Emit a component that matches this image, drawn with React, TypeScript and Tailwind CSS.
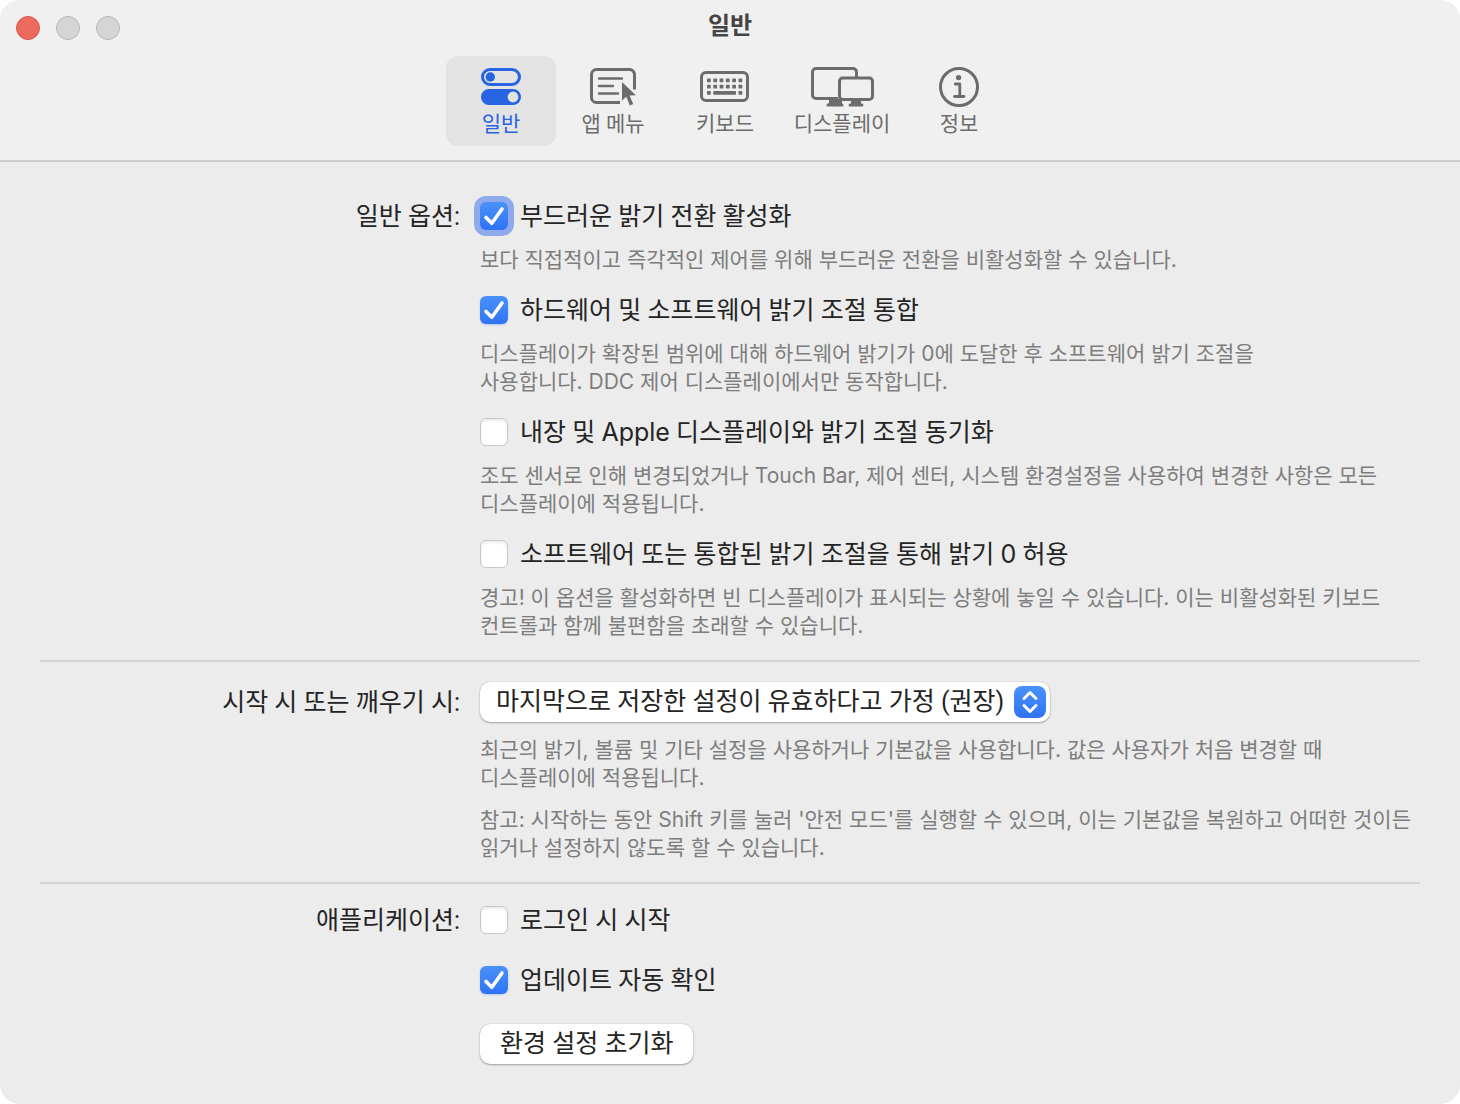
import { useState, type ReactNode } from "react";

const INK = "#6c6c6c";

function TogglesIcon() {
  return (
    <svg width="40" height="38" viewBox="0 0 40 38" fill="none">
      <rect x="1.5" y="1.5" width="37" height="15" rx="7.5" stroke="#2664e2" strokeWidth="3" />
      <circle cx="9.3" cy="9" r="4.7" fill="#2664e2" />
      <path
        fillRule="evenodd"
        fill="#2664e2"
        d="M8 21h24a8 8 0 0 1 0 16H8a8 8 0 0 1 0-16Zm24 2.6a5.4 5.4 0 1 0 0 10.8a5.4 5.4 0 0 0 0-10.8Z"
      />
    </svg>
  );
}

function MenuIcon() {
  return (
    <svg width="48" height="38" viewBox="-1 0 48 38" fill="none">
      <path
        d="M30 34.5H6.5a5 5 0 0 1-5-5v-23a5 5 0 0 1 5-5h33a5 5 0 0 1 5 5V21.5"
        stroke={INK}
        strokeWidth="3"
      />
      <path d="M9 10.5h23M9 18h14M9 25.5h19" stroke={INK} strokeWidth="2.4" strokeLinecap="round" />
      <path d="M32 14v18.5l4.3-3.8 3.5 8.8 3.4-1.4-3.6-8.5 6.2-.4Z" fill={INK} />
    </svg>
  );
}

function KeyboardIcon() {
  const cols = [7, 13.3, 19.6, 25.9, 32.2, 38.5];
  return (
    <svg width="50" height="32" viewBox="0 0 50 32" fill="none">
      <rect x="1.5" y="1.5" width="46" height="28" rx="4.5" stroke={INK} strokeWidth="3" />
      {cols.map((x) => (
        <g key={x} fill={INK}>
          <rect x={x} y="7.4" width="3.8" height="3.8" rx="0.6" />
          <rect x={x} y="13.7" width="3.8" height="3.8" rx="0.6" />
        </g>
      ))}
      <rect x="7" y="20" width="3.8" height="3.8" rx="0.6" fill={INK} />
      <rect x="13.3" y="20" width="22.7" height="3.8" rx="0.8" fill={INK} />
      <rect x="38.5" y="20" width="3.8" height="3.8" rx="0.6" fill={INK} />
    </svg>
  );
}

function DisplaysIcon() {
  return (
    <svg width="64" height="40" viewBox="-1 0 64 40" fill="none">
      <path
        d="M27 31.5H5A3.5 3.5 0 0 1 1.5 28V5A3.5 3.5 0 0 1 5 1.5h37A3.5 3.5 0 0 1 45.5 5V10"
        stroke={INK}
        strokeWidth="3"
      />
      <rect x="28.5" y="11" width="33" height="21.5" rx="3.2" stroke={INK} strokeWidth="3" />
      <path d="M18 32h13v4.5a1.5 1.5 0 0 1 0 3H17a1.5 1.5 0 0 1 0-3l1-.8Z" fill={INK} />
      <path d="M40 33h10v3.3l1.2.4a1.4 1.4 0 0 1-.4 2.8H39.2a1.4 1.4 0 0 1-.4-2.8l1.2-.4Z" fill={INK} />
    </svg>
  );
}

function InfoIcon() {
  return (
    <svg width="40" height="40" viewBox="0 0 40 40" fill="none">
      <circle cx="20" cy="20" r="18.5" stroke={INK} strokeWidth="3" />
      <circle cx="19.6" cy="10.6" r="2.7" fill={INK} />
      <path d="M16.3 17h4.5v12.5M15.5 29.5h9.5" stroke={INK} strokeWidth="2.8" strokeLinecap="round" strokeLinejoin="round" />
    </svg>
  );
}

const tabs: { label: string; icon: ReactNode; wide?: boolean }[] = [
  { label: "일반", icon: <TogglesIcon /> },
  { label: "앱 메뉴", icon: <MenuIcon /> },
  { label: "키보드", icon: <KeyboardIcon /> },
  { label: "디스플레이", icon: <DisplaysIcon />, wide: true },
  { label: "정보", icon: <InfoIcon /> },
];

function Latin({ children }: { children: ReactNode }) {
  return <span className="font-['Inter',sans-serif] leading-none">{children}</span>;
}

function Check({ on = false, focused = false, children }: { on?: boolean; focused?: boolean; children: ReactNode }) {
  const [checked, setChecked] = useState(on);
  return (
    <label className="flex h-7 items-center gap-3">
      <span className="grid size-7 shrink-0">
        <input
          type="checkbox"
          checked={checked}
          onChange={() => setChecked(!checked)}
          className={
            "col-start-1 row-start-1 size-7 appearance-none rounded-md outline-none border border-[#c6c6c6] bg-white shadow-[inset_0_2px_3px_rgba(0,0,0,0.08)] checked:border-0 checked:bg-linear-to-b checked:from-[#4a92f9] checked:to-[#2f72f5] " +
            (focused ? "ring-6 ring-[#8eaaeb] checked:shadow-none" : "checked:shadow-[0_1px_2px_rgba(47,114,245,0.3)]")
          }
        />
        {checked && (
          <svg viewBox="0 0 28 28" className="pointer-events-none z-10 col-start-1 row-start-1 size-7" fill="none">
            <path d="M6 15.5L11.8 21.3L22 7" stroke="white" strokeWidth="3.6" strokeLinecap="round" strokeLinejoin="round" />
          </svg>
        )}
      </span>
      <span className="pt-0.5 whitespace-nowrap">{children}</span>
    </label>
  );
}

function Note({ children }: { children: ReactNode }) {
  return (
    <p className="font-['Inter','Noto_Sans_CJK_KR',sans-serif] text-[21px] leading-7 text-[#7d7d7d]">{children}</p>
  );
}

function Section({ title, children }: { title: ReactNode; children: ReactNode }) {
  return (
    <section className="grid grid-cols-[420px_minmax(0,1fr)] gap-x-5">
      <h2 className="text-right leading-[30px]">{title}</h2>
      <div>{children}</div>
    </section>
  );
}

export default function App() {
  const [active, setActive] = useState(0);
  return (
    <div className="min-h-screen bg-white">
      <div className="min-h-screen overflow-hidden rounded-[20px] bg-[#ececec] font-['Roboto','Noto_Sans_CJK_KR',sans-serif] text-[25px] leading-7 break-keep text-[#242424]">
        <header className="border-b-2 border-[#cbcbcb] bg-[#f0f0f0] pb-3.5">
          <div className="grid h-14 grid-cols-3 px-4">
            <div className="flex items-center gap-4">
              <button aria-label="닫기" className="size-6 rounded-full border border-[#d4574c] bg-[#ec6a5e]" />
              <button aria-label="최소화" className="size-6 rounded-full border border-[#b5b5b5] bg-[#d5d5d5]" />
              <button aria-label="확대" className="size-6 rounded-full border border-[#b5b5b5] bg-[#d5d5d5]" />
            </div>
            <h1 className="pt-3 text-center text-2xl leading-7 font-bold text-[#444444]">일반</h1>
          </div>
          <nav className="flex justify-center gap-0.5">
            {tabs.map((t, i) => (
              <button
                key={t.label}
                onClick={() => setActive(i)}
                className={
                  "flex h-[90px] flex-col items-center rounded-xl pt-2 text-[21px] leading-7 " +
                  (t.wide ? "w-[120px] " : "w-[110px] ") +
                  (i === active ? "bg-[#e3e3e3] text-[#2664e2]" : "text-[#6c6c6c]")
                }
              >
                <span className="flex h-[46px] items-center">{t.icon}</span>
                <span>{t.label}</span>
              </button>
            ))}
          </nav>
        </header>

        <main className="px-10 pt-10 pb-10">
          <Section title="일반 옵션:">
            <div className="flex flex-col gap-[22px]">
              <div className="flex flex-col gap-4">
                <Check on focused>부드러운 밝기 전환 활성화</Check>
                <Note>보다 직접적이고 즉각적인 제어를 위해 부드러운 전환을 비활성화할 수 있습니다.</Note>
              </div>
              <div className="flex flex-col gap-4">
                <Check on>하드웨어 및 소프트웨어 밝기 조절 통합</Check>
                <Note>
                  디스플레이가 확장된 범위에 대해 하드웨어 밝기가 0에 도달한 후 소프트웨어 밝기 조절을
                  <br />
                  사용합니다. DDC 제어 디스플레이에서만 동작합니다.
                </Note>
              </div>
              <div className="flex flex-col gap-4">
                <Check>
                  내장 및 <Latin>Apple</Latin> 디스플레이와 밝기 조절 동기화
                </Check>
                <Note>
                  조도 센서로 인해 변경되었거나 Touch Bar, 제어 센터, 시스템 환경설정을 사용하여 변경한 사항은 모든
                  <br />
                  디스플레이에 적용됩니다.
                </Note>
              </div>
              <div className="flex flex-col gap-4">
                <Check>
                  소프트웨어 또는 통합된 밝기 조절을 통해 밝기 <Latin>0</Latin> 허용
                </Check>
                <Note>
                  경고! 이 옵션을 활성화하면 빈 디스플레이가 표시되는 상황에 놓일 수 있습니다. 이는 비활성화된 키보드
                  <br />
                  컨트롤과 함께 불편함을 초래할 수 있습니다.
                </Note>
              </div>
            </div>
          </Section>

          <hr className="my-5 border-t-2 border-[#d4d4d4]" />

          <Section
            title={
              <label htmlFor="startup" className="block leading-[42px]">
                시작 시 또는 깨우기 시:
              </label>
            }
          >
            <div className="relative w-[570px]">
              <select
                id="startup"
                className="h-10 w-full appearance-none rounded-[10px] bg-white pr-10 pl-4 shadow-[0_0_1px_rgba(0,0,0,0.3),0_1px_2px_rgba(0,0,0,0.3)] outline-none"
              >
                <option>마지막으로 저장한 설정이 유효하다고 가정 (권장)</option>
              </select>
              <svg viewBox="0 0 32 32" className="pointer-events-none absolute top-1 right-1 size-8 rounded-lg bg-linear-to-b from-[#4a92f9] to-[#2f72f5]" fill="none">
                <path d="M10 12.5L16 6.5L22 12.5M10 19.5L16 25.5L22 19.5" stroke="white" strokeWidth="3" strokeLinecap="round" strokeLinejoin="round" />
              </svg>
            </div>
            <div className="mt-3.5 flex flex-col gap-3.5">
              <Note>
                최근의 밝기, 볼륨 및 기타 설정을 사용하거나 기본값을 사용합니다. 값은 사용자가 처음 변경할 때
                <br />
                디스플레이에 적용됩니다.
              </Note>
              <Note>
                참고: 시작하는 동안 Shift 키를 눌러 '안전 모드'를 실행할 수 있으며, 이는 기본값을 복원하고 어떠한 것이든
                <br />
                읽거나 설정하지 않도록 할 수 있습니다.
              </Note>
            </div>
          </Section>

          <hr className="mt-5 mb-[22px] border-t-2 border-[#d4d4d4]" />

          <Section title="애플리케이션:">
            <div className="flex flex-col items-start">
              <Check>로그인 시 시작</Check>
              <div className="mt-8">
                <Check on>업데이트 자동 확인</Check>
              </div>
              <button className="mt-[30px] h-10 rounded-[10px] bg-white px-5 leading-9 shadow-[0_0_1px_rgba(0,0,0,0.3),0_1px_2px_rgba(0,0,0,0.3)]">
                환경 설정 초기화
              </button>
            </div>
          </Section>
        </main>
      </div>
    </div>
  );
}
